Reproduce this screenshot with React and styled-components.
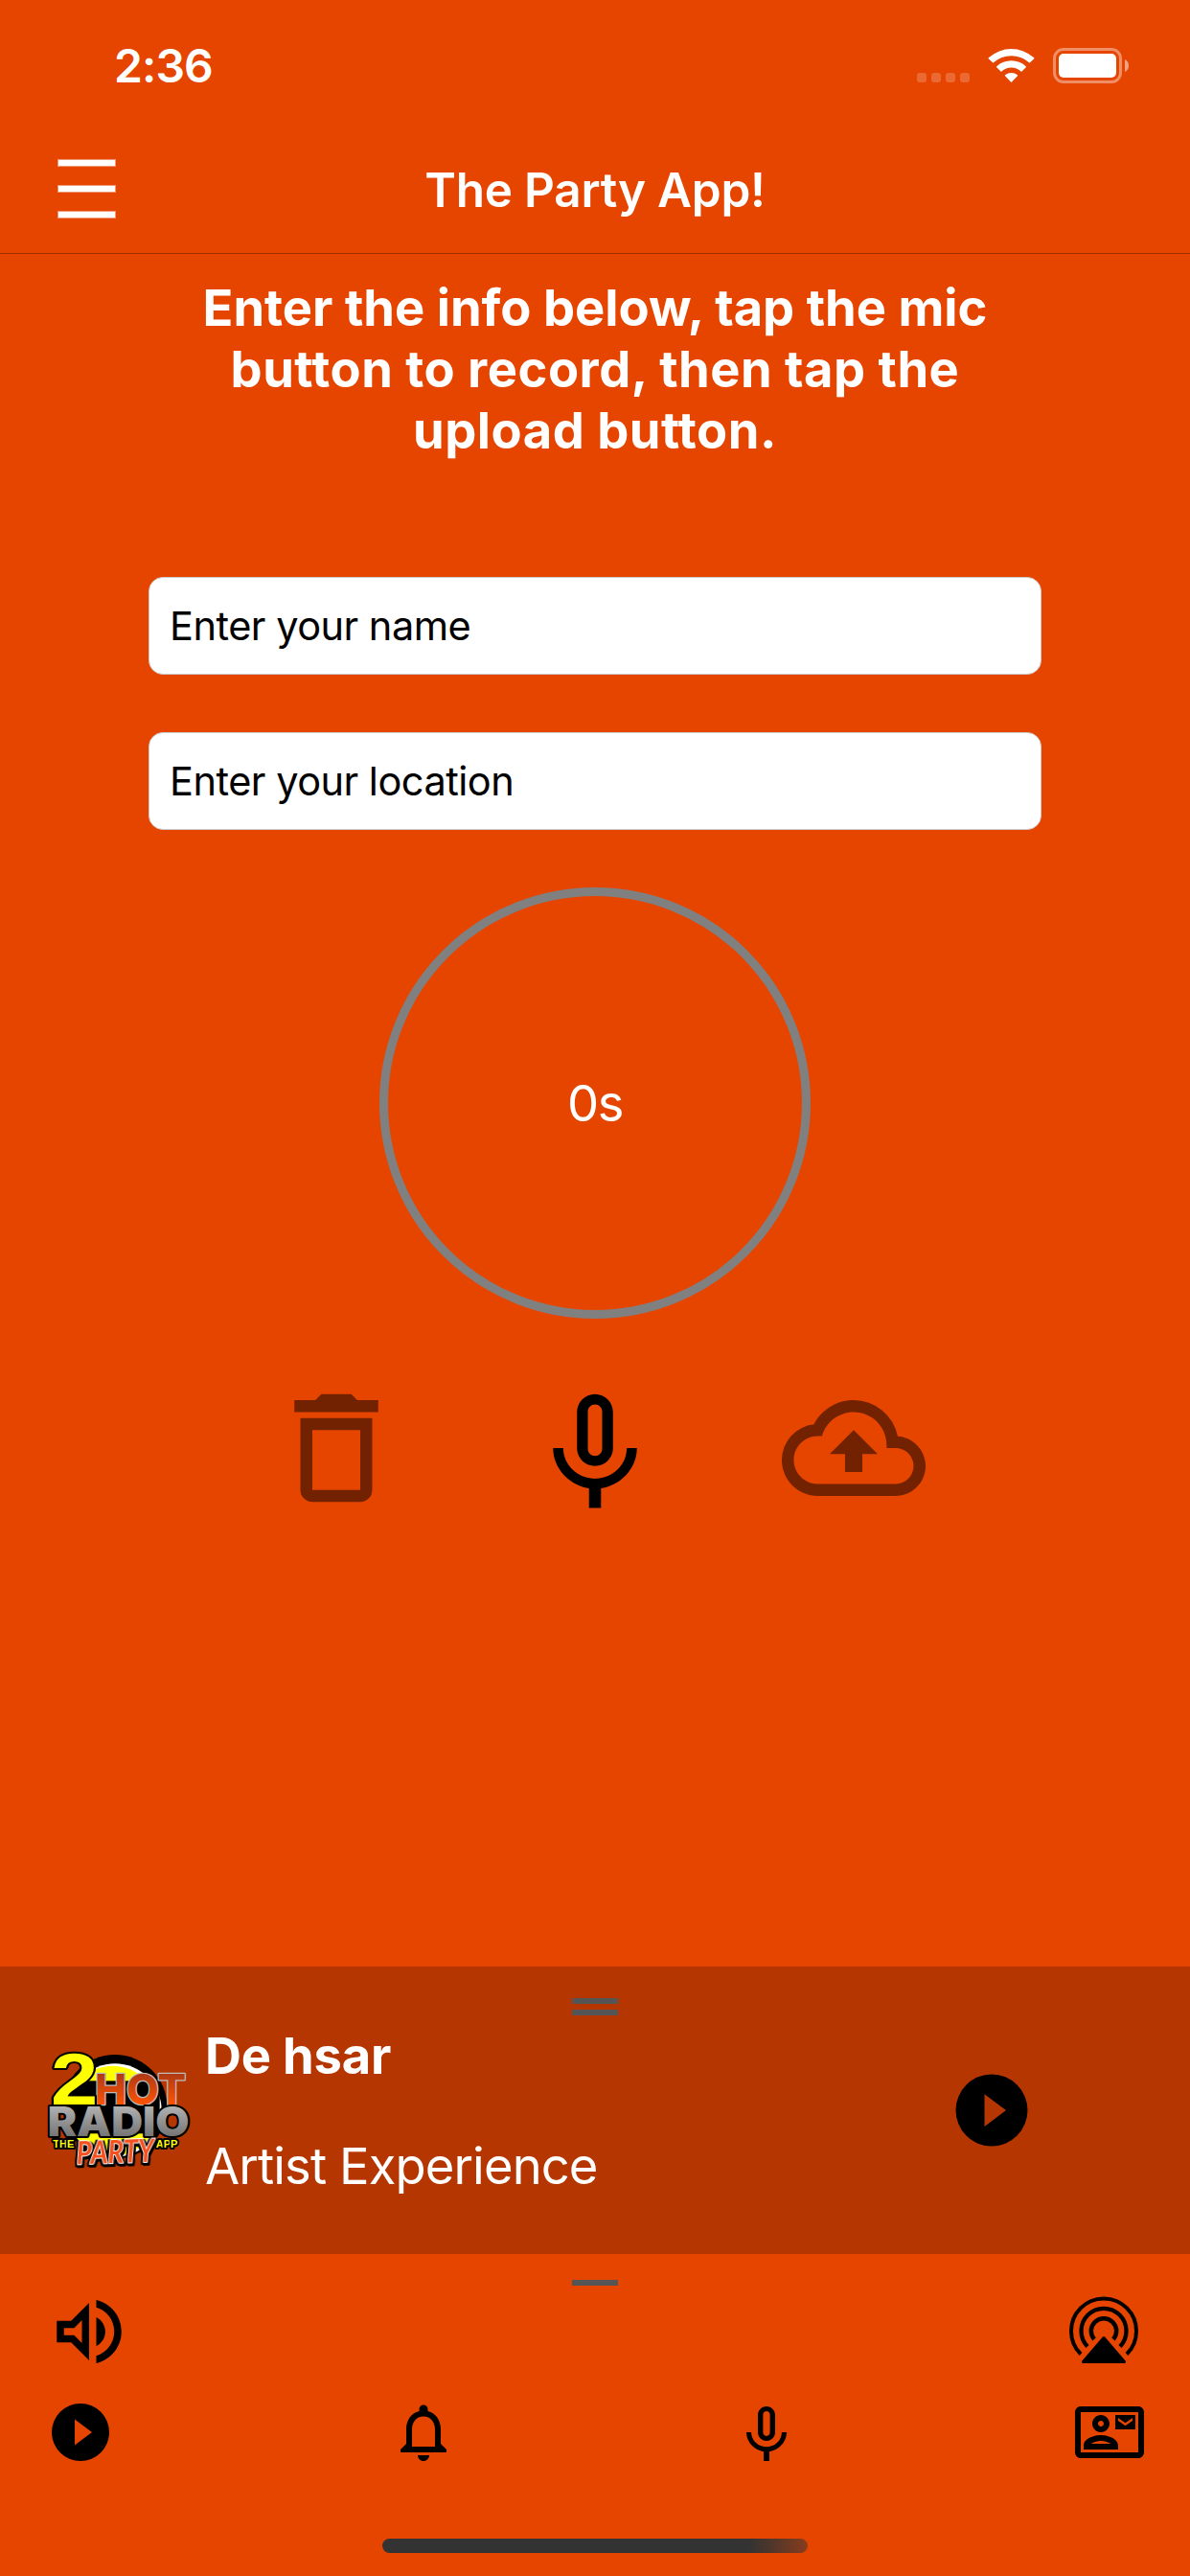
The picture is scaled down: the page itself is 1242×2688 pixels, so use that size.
import React, { useState } from "react";
import styled, { createGlobalStyle } from "styled-components";

const GlobalStyle = createGlobalStyle`
  * {
    box-sizing: border-box;
  }

  body {
    margin: 0;
    background-color: #e64500;
    font-family: Inter, "Liberation Sans", sans-serif;
  }

  svg {
    display: block;
    flex-shrink: 0;
  }

  button {
    background: transparent;
    border: none;
    padding: 0;
    color: inherit;
    font: inherit;
  }
`;

const Screen = styled.div`
  width: 1242px;
  height: 2688px;
  background-color: #e64500;
  color: #fff;
  display: flex;
  flex-direction: column;
  overflow: hidden;
`;

const StatusBar = styled.div`
  height: 132px;
  padding: 4px 64px 0 119px;
  display: flex;
  align-items: center;
  justify-content: space-between;
`;

const Time = styled.span`
  font-size: 48px;
  font-weight: 600;
  letter-spacing: -0.9px;
`;

const StatusIcons = styled.div`
  display: flex;
  align-items: flex-end;
  height: 37px;
`;

const SignalDots = styled.div`
  display: flex;
  gap: 5px;
  margin: 0 19px 1px 0;
`;

const Dot = styled.i`
  width: 10px;
  height: 10px;
  border-radius: 3px;
  background-color: rgba(255, 255, 255, 0.2);
`;

const Header = styled.header`
  height: 133px;
  padding: 0 60px;
  border-bottom: 1px solid #a13000;
  display: grid;
  grid-template-columns: 60px 1fr 60px;
  align-items: center;
`;

const MenuButton = styled.button`
  display: flex;
  flex-direction: column;
  gap: 19px;
  margin-bottom: 2px;
`;

const MenuLine = styled.span`
  height: 8px;
  width: 61px;
  background-color: #fff;
  background-clip: padding-box;
  border: 1px solid rgba(255, 255, 255, 0.45);
`;

const Title = styled.h1`
  margin: 0;
  font-size: 49.5px;
  font-weight: 600;
  text-align: center;
  letter-spacing: -0.25px;
`;

const Main = styled.main`
  flex: 1;
  display: flex;
  flex-direction: column;
  align-items: center;
`;

const Instructions = styled.h2`
  margin: 24px 0 121px;
  font-size: 52.5px;
  line-height: 64px;
  font-weight: 700;
  text-align: center;
`;

const Line = styled.span`
  display: block;
  letter-spacing: ${(props) => props.$spacing}px;
`;

const Fields = styled.div`
  width: 932px;
  display: flex;
  flex-direction: column;
  gap: 60px;
`;

const Field = styled.input`
  height: 102px;
  width: 100%;
  padding: 0 20px 0 21px;
  border: 1px solid #ccc;
  border-radius: 15px;
  background-color: #fff;
  color: #000;
  font-family: inherit;
  font-size: 41.5px;
  letter-spacing: -0.5px;
  outline: none;

  &::placeholder {
    color: #000;
    opacity: 1;
  }
`;

const Timer = styled.div`
  margin: 60px 0;
  width: 450px;
  height: 450px;
  border: 9px solid #808080;
  border-radius: 50%;
  display: flex;
  align-items: center;
  justify-content: center;
  font-size: 52.5px;
  letter-spacing: -1.5px;
`;

const Controls = styled.div`
  width: 690px;
  display: flex;
  justify-content: space-between;
  color: #000;
`;

const ControlButton = styled.button`
  &:disabled {
    opacity: 0.5;
    color: #000;
  }
`;

const Player = styled.section`
  height: 300px;
  padding-top: 33px;
  background-color: #b53600;
  display: flex;
  flex-direction: column;
  align-items: center;
`;

const Handle = styled.div`
  width: 48px;
  height: 6px;
  background-color: #555;

  & + & {
    margin-top: 6px;
  }
`;

const PlayerRow = styled.div`
  width: 100%;
  height: 198px;
  padding: 0 162px 0 45px;
  display: flex;
  align-items: center;
`;

const LogoWrapper = styled.div`
  margin: 0 9px 4px 0;
`;

const Track = styled.div`
  flex: 1;
  display: flex;
  flex-direction: column;
  gap: 51px;
  font-size: 52.5px;
  line-height: 64px;
`;

const TrackName = styled.strong`
  font-weight: 700;
  letter-spacing: -0.2px;
`;

const TrackArtist = styled.span`
  letter-spacing: -0.9px;
`;

const PlayButton = styled.button`
  color: #000;
`;

const Footer = styled.footer`
  height: 336px;
  padding-top: 27px;
  color: #000;
  display: flex;
  flex-direction: column;
  align-items: center;
`;

const CastRow = styled.div`
  width: 100%;
  margin-top: 3px;
  padding: 0 54px 0 48px;
  display: flex;
  align-items: center;
  justify-content: space-between;

  button:last-child {
    margin-bottom: 2px;
  }
`;

const TabBar = styled.nav`
  width: 100%;
  margin-top: 24px;
  padding: 0 48px;
  display: flex;
  justify-content: space-between;
`;

const HomeIndicator = styled.div`
  width: 444px;
  height: 15px;
  margin-top: 75px;
  border-radius: 8px;
  background: linear-gradient(to right, #333 86%, #4c362c 91%, #883d1d 100%);
`;

const paths = {
  trash:
    "M6 19a2 2 0 0 0 2 2h8a2 2 0 0 0 2-2V7H6v12zM8 9h8v10H8V9zm7.5-5l-1-1h-5l-1 1H5v2h14V4h-3.5z",
  mic: "M12 15c1.66 0 3-1.34 3-3V6c0-1.66-1.34-3-3-3S9 4.34 9 6v6c0 1.66 1.34 3 3 3zm-1.2-9.1c0-.66.54-1.2 1.2-1.2s1.2.54 1.2 1.2v6.2c0 .66-.54 1.2-1.2 1.2s-1.2-.54-1.2-1.2V5.9zm6.5 6.1c0 3-2.54 5.1-5.3 5.1S6.7 15 6.7 12H5c0 3.41 2.72 6.23 6 6.72V22h2v-3.28c3.28-.48 6-3.3 6-6.72h-1.7z",
  upload:
    "M19.35 10.04A7.49 7.49 0 0 0 12 4C9.11 4 6.6 5.64 5.35 8.04A5.994 5.994 0 0 0 0 14c0 3.31 2.69 6 6 6h13c2.76 0 5-2.24 5-5 0-2.64-2.05-4.78-4.65-4.96zM19 18H6c-2.21 0-4-1.79-4-4s1.79-4 4-4h.71C7.37 7.69 9.48 6 12 6c3.04 0 5.5 2.46 5.5 5.5v.5H19c1.66 0 3 1.34 3 3s-1.34 3-3 3zM8 13h2.55v3h2.9v-3H16l-4-4-4 4z",
  play: "M12 2a10 10 0 1 0 0 20 10 10 0 0 0 0-20zM10 16.5v-9l6 4.5-6 4.5z",
  bell: "M12 22c1.1 0 2-.9 2-2h-4c0 1.1.89 2 2 2zm6-6v-5c0-3.07-1.64-5.64-4.5-6.32V4c0-.83-.67-1.5-1.5-1.5s-1.5.67-1.5 1.5v.68C7.63 5.36 6 7.92 6 11v5l-2 2v1h16v-1l-2-2zm-2 1H8v-6c0-2.48 1.51-4.5 4-4.5s4 2.02 4 4.5v6z",
  volume:
    "M3 9v6h4l5 5V4L7 9H3zm7-.17v6.34L7.83 13H5v-2h2.83L10 8.83zM16.5 12c0-1.77-1.02-3.29-2.5-4.03v8.05c1.48-.73 2.5-2.25 2.5-4.02zM14 3.23v2.06c2.89.86 5 3.54 5 6.71s-2.11 5.85-5 6.71v2.06c4.01-.91 7-4.49 7-8.77s-2.99-7.86-7-8.77z",
  contact:
    "M22 3H2C.9 3 0 3.9 0 5v14c0 1.1.9 2 2 2h20c1.1 0 1.99-.9 1.99-2L24 5c0-1.1-.9-2-2-2zm0 16H2V5h20v14zM21 6h-7v5h7V6zm-1 2l-2.5 1.75L15 8V7l2.5 1.75L20 7v1zM9 12c1.65 0 3-1.35 3-3s-1.35-3-3-3-3 1.35-3 3 1.35 3 3 3zm0-4c.55 0 1 .45 1 1s-.45 1-1 1-1-.45-1-1 .45-1 1-1zm6 8.59c0-2.5-3.97-3.58-6-3.58s-6 1.08-6 3.58V18h12v-1.41zM5.48 16c.74-.5 2.22-1 3.52-1s2.77.49 3.52 1H5.48z",
};

const Icon = ({ name, size }) => (
  <svg width={size} height={size} viewBox="0 0 24 24" fill="currentColor">
    <path fillRule="evenodd" d={paths[name]} />
  </svg>
);

const WifiIcon = styled(({ className }) => (
  <svg className={className} width="49" height="37" viewBox="0 0 49 37" fill="#fff">
    <path d="M.7 11.3Q.3 10.7 1 10.1A35 35 0 0 1 48 10.1Q48.7 10.7 48.3 11.3L44 15.2Q43.500 15.7 43 15.2A28 28 0 0 0 6 15.2Q5.5 15.7 5 15.2Z" />
    <path d="M9.2 20.3Q8.8 19.8 9.3 19.2A22.500 22.500 0 0 1 39.7 19.2Q40.2 19.8 39.8 20.3L35.5 24.4Q35 24.9 34.5 24.4A15 15 0 0 0 14.5 24.4Q14 24.9 13.5 24.4Z" />
    <path d="M18 29.3Q17.5 28.8 18 28.2A10.5 10.5 0 0 1 31 28.2Q31.5 28.8 31 29.3L25 35.5Q24.500 36 24 35.5Z" />
  </svg>
))`
  margin-right: 19px;
`;

const BatteryIcon = () => (
  <svg width="79" height="37" viewBox="0 0 79 37">
    <rect
      x="1.5"
      y="1.5"
      width="69"
      height="34"
      rx="9.5"
      fill="none"
      stroke="#fff"
      strokeOpacity=".4"
      strokeWidth="3"
    />
    <rect x="6" y="6" width="60" height="25" rx="5" fill="#fff" />
    <path d="M75 12c2.5 1 4 3.5 4 6.5s-1.5 5.5-4 6.5z" fill="#fff" fillOpacity=".5" />
  </svg>
);

const AirplayIcon = () => (
  <svg width="72" height="72" viewBox="0 0 72 72" fill="none" stroke="currentColor">
    <path strokeWidth="4" d="M12 60.5A34 34 0 1 1 60 60.5" />
    <path strokeWidth="4.3" d="M19 52.5A23.5 23.5 0 1 1 53 52.5" />
    <path strokeWidth="4.5" d="M26 45A13.2 13.2 0 1 1 46 45" />
    <path
      fill="currentColor"
      strokeWidth="3"
      strokeLinejoin="round"
      d="M36 43.5L57.5 68.5H14.5Z"
    />
  </svg>
);

const LogoSvg = styled.svg`
  overflow: visible;
`;

const LogoText = styled.text`
  font-family: "Liberation Sans", sans-serif;
  font-weight: 700;
  paint-order: stroke;
  stroke-linejoin: round;
`;

const WideText = styled(LogoText)`
  font-family: Inter, sans-serif;
  font-weight: ${(props) => props.$weight};
`;

const PartyText = styled(LogoText)`
  font-family: Lato, "Liberation Sans", sans-serif;
  font-weight: 700;
  font-style: italic;
  filter: drop-shadow(-6px 0 0 #000) drop-shadow(6px 3px 0 #000) drop-shadow(0 6px 0 #000);
`;

const StationLogo = () => (
  <LogoSvg width="160" height="140" viewBox="0 0 480 420">
    <defs>
      <linearGradient id="hot" x1="0" y1="0" x2="0" y2="1">
        <stop offset="0.2" stopColor="#b03a14" />
        <stop offset="0.8" stopColor="#ff5400" />
      </linearGradient>
      <linearGradient id="steel" x1="0" y1="0" x2="0" y2="1">
        <stop offset="0.2" stopColor="#b0b0b0" />
        <stop offset="0.8" stopColor="#757575" />
      </linearGradient>
    </defs>
    <circle cx="225" cy="205" r="163" fill="#000" />
    <circle cx="225" cy="216" r="146" fill="#fff" />
    <circle cx="218" cy="218" r="141" fill="#ff0" />
    <rect x="90" y="124" width="275" height="165" fill="#000" />
    <WideText
      $weight={800}
      x="163"
      y="199"
      fontSize="132"
      textLength="284"
      lengthAdjust="spacingAndGlyphs"
      fill="url(#hot)"
      stroke="#bbb"
      strokeWidth="8"
    >
      HOT
    </WideText>
    <LogoText
      x="24"
      y="199"
      fontSize="226"
      textLength="148"
      lengthAdjust="spacingAndGlyphs"
      fill="#ff0"
      stroke="#000"
      strokeWidth="12"
    >
      2
    </LogoText>
    <WideText
      $weight={900}
      x="14"
      y="298"
      fontSize="128"
      textLength="444"
      lengthAdjust="spacingAndGlyphs"
      fill="url(#steel)"
      stroke="#000"
      strokeWidth="12"
    >
      RADIO
    </WideText>
    <LogoText x="31" y="333" fontSize="33" textLength="66" fill="#ff0" stroke="#000" strokeWidth="12">
      THE
    </LogoText>
    <LogoText x="353" y="333" fontSize="33" textLength="68" fill="#ff0" stroke="#000" strokeWidth="12">
      APP
    </LogoText>
    <PartyText
      x="104"
      y="382"
      fontSize="98"
      textLength="244"
      lengthAdjust="spacingAndGlyphs"
      fill="#f4511e"
      stroke="#fff"
      strokeWidth="6"
      transform="rotate(-2 225 350)"
    >
      PARTY
    </PartyText>
  </LogoSvg>
);

const tabs = ["play", "bell", "mic", "contact"];

const App = () => {
  const [name, setName] = useState("");
  const [location, setLocation] = useState("");

  return (
    <Screen>
      <GlobalStyle />
      <StatusBar>
        <Time>2:36</Time>
        <StatusIcons>
          <SignalDots>
            <Dot />
            <Dot />
            <Dot />
            <Dot />
          </SignalDots>
          <WifiIcon />
          <BatteryIcon />
        </StatusIcons>
      </StatusBar>

      <Header>
        <MenuButton>
          <MenuLine />
          <MenuLine />
          <MenuLine />
        </MenuButton>
        <Title>The Party App!</Title>
      </Header>

      <Main>
        <Instructions>
          <Line $spacing={0}>Enter the info below, tap the mic</Line>
          <Line $spacing={0.5}>button to record, then tap the</Line>
          <Line $spacing={0.5}>upload button.</Line>
        </Instructions>
        <Fields>
          <Field
            placeholder="Enter your name"
            value={name}
            onChange={(e) => setName(e.target.value)}
          />
          <Field
            placeholder="Enter your location"
            value={location}
            onChange={(e) => setLocation(e.target.value)}
          />
        </Fields>
        <Timer>0s</Timer>
        <Controls>
          <ControlButton disabled>
            <Icon name="trash" size={150} />
          </ControlButton>
          <ControlButton>
            <Icon name="mic" size={150} />
          </ControlButton>
          <ControlButton disabled>
            <Icon name="upload" size={150} />
          </ControlButton>
        </Controls>
      </Main>

      <Player>
        <Handle />
        <Handle />
        <PlayerRow>
          <LogoWrapper>
            <StationLogo />
          </LogoWrapper>
          <Track>
            <TrackName>De hsar</TrackName>
            <TrackArtist>Artist Experience</TrackArtist>
          </Track>
          <PlayButton>
            <Icon name="play" size={90} />
          </PlayButton>
        </PlayerRow>
      </Player>

      <Footer>
        <Handle />
        <CastRow>
          <button>
            <Icon name="volume" size={90} />
          </button>
          <button>
            <AirplayIcon />
          </button>
        </CastRow>
        <TabBar>
          {tabs.map((tab) => (
            <button key={tab}>
              <Icon name={tab} size={72} />
            </button>
          ))}
        </TabBar>
        <HomeIndicator />
      </Footer>
    </Screen>
  );
};

export default App;
